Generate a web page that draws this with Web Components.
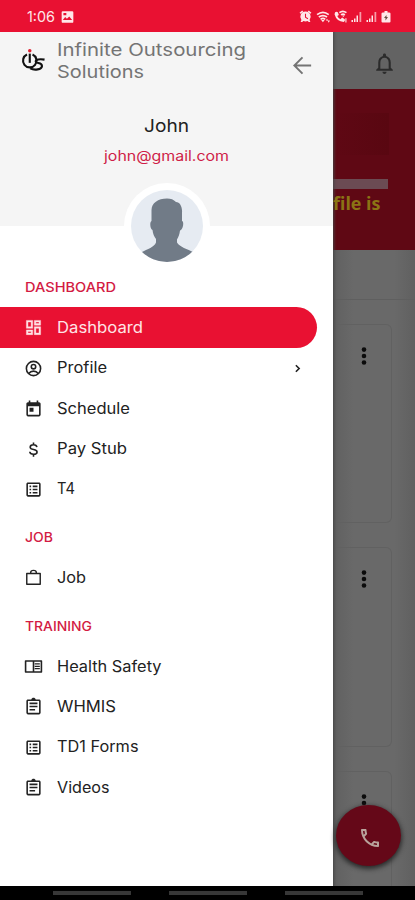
<!DOCTYPE html>
<html lang="en"><head><meta charset="utf-8"><title>Infinite Outsourcing Solutions</title>
<style>html,body{margin:0;padding:0;background:#000}</style></head>
<body><app-screen></app-screen>
<script>
const define = (name, html, setup) => {
  const t = document.createElement('template');
  t.innerHTML = html;
  customElements.define(name, class extends HTMLElement {
    connectedCallback() {
      if (this.shadowRoot) return;
      this.attachShadow({mode: 'open'}).append(t.content.cloneNode(true));
      if (setup) setup(this, this.shadowRoot);
    }
  });
};

const ICONS = {
  dashboard: '<path d="M19 5v2h-4V5h4M9 5v6H5V5h4m10 8v6h-4v-6h4M9 17v2H5v-2h4M21 3h-8v6h8V3zM11 3H3v10h8V3zm10 8h-8v10h8V11zm-10 4H3v6h8v-6z" stroke="currentColor" stroke-width=".5"/>',
  profile: '<g fill="none" stroke="currentColor" stroke-width="2"><circle cx="12" cy="12" r="9"/><circle cx="12" cy="9.7" r="2.8"/><path d="M6 18.3c1.5-2 3.600-3 6-3s4.500 1 6 3"/></g>',
  calendar: '<path d="M19 4h-1V2h-2v2H8V2H6v2H5c-1.100 0-2 .9-2 2v14c0 1.100.9 2 2 2h14c1.100 0 2-.9 2-2V6c0-1.100-.9-2-2-2zm0 16H5V9h14v11zM7 11h5v5H7z"/>',
  dollar: '<path d="M12 3v3m0 12v3M16.300 9c-.3-2-2-3-4.300-3-2.500 0-4.200 1.100-4.200 3 0 4 8.700 2 8.700 6 0 2-1.900 3-4.500 3s-4.500-1.100-4.700-3.200" fill="none" stroke="currentColor" stroke-width="2"/>',
  list: '<path d="M19 5v14H5V5h14m0-2H5c-1.100 0-2 .9-2 2v14c0 1.100.9 2 2 2h14c1.100 0 2-.9 2-2V5c0-1.100-.9-2-2-2zM11 7h6v2h-6zm0 4h6v2h-6zm0 4h6v2h-6zM7 7h2v2H7zm0 4h2v2H7zm0 4h2v2H7z"/>',
  bag: '<path d="M8.500 7V5.500C8.500 4 9.500 3 12 3s3.500 1 3.500 2.500V7M3.500 7h17v13.500h-17z" fill="none" stroke="currentColor" stroke-width="1.800" stroke-linejoin="round"/>',
  reader: '<path d="M2 5h20v14H2zM12 5v14" fill="none" stroke="currentColor" stroke-width="2" stroke-linejoin="round"/><path d="M13.500 8H20v1.500h-6.500zm0 3H20v1.500h-6.500zm0 3H20v1.500h-6.500z"/>',
  clipboard: '<path d="M7 15h7v2H7zm0-4h10v2H7zm0-4h10v2H7zM19 3h-4.180C14.400 1.840 13.300 1 12 1s-2.400.84-2.820 2H5c-1.100 0-2 .9-2 2v15c0 1.100.9 2 2 2h14c1.100 0 2-.9 2-2V5c0-1.100-.9-2-2-2zm0 17H5V5h14v15z"/>',
  chevron: '<path d="M9 6l6 6-6 6" fill="none" stroke="currentColor" stroke-width="3"/>',
  back: '<path d="M21 12H4M12 3.500L3.500 12l8.500 8.500" fill="none" stroke="currentColor" stroke-width="2"/>',
  bell: '<path d="M12 22c1.100 0 2-.9 2-2h-4c0 1.100.9 2 2 2zm6-6v-5c0-3.070-1.630-5.640-4.500-6.320V4c0-.83-.67-1.500-1.500-1.500s-1.500.67-1.500 1.500v.68C7.640 5.360 6 7.920 6 11v5l-2 2v1h16v-1l-2-2zm-2 1H8v-6c0-2.480 1.510-4.500 4-4.500s4 2.020 4 4.500v6z"/>',
  phone: '<path d="M6.540 5c.06.89.21 1.760.45 2.590l-1.200 1.200c-.41-1.200-.67-2.470-.76-3.790h1.510m9.860 12.020c.85.24 1.720.39 2.600.45v1.490c-1.320-.09-2.590-.35-3.800-.75l1.200-1.190M7.500 3H4c-.55 0-1 .45-1 1 0 9.390 7.610 17 17 17 .55 0 1-.45 1-1v-3.490c0-.55-.45-1-1-1-1.240 0-2.450-.2-3.570-.57-.1-.04-.21-.05-.31-.05-.26 0-.51.1-.71.290l-2.200 2.200c-2.830-1.450-5.150-3.760-6.590-6.590l2.200-2.200c.28-.28.36-.67.25-1.020C8.700 6.450 8.500 5.250 8.500 4c0-.55-.45-1-1-1z"/>',
  dots: '<circle cx="12" cy="5" r="2.500"/><circle cx="12" cy="12" r="2.500"/><circle cx="12" cy="19" r="2.500"/>',
  photo: '<path fill-rule="evenodd" d="M4 2h16q2 0 2 2v16q0 2-2 2H4q-2 0-2-2V4q0-2 2-2zm0 15h16l-5-6-4 4-3-3zM5 5v4h5V5z"/>',
  alarm: '<path d="M6 1 1 5l2 2 5-4zm12 0 5 4-2 2-5-4z"/><path fill-rule="evenodd" d="M12 3a9.500 9.500 0 0 1 7.500 15.500L21 22h-3l-2-1.500a10 10 0 0 1-8 0L6 22H3l1.500-3.500A9.500 9.500 0 0 1 12 3zm-1 4v7l5 3 1-2-4-2V7z"/>',
  wifi: '<g fill="none" stroke="currentColor" stroke-width="3"><path d="M1 8q10-8 20 0M4 12q7-5 14 0M7 16q4-3 8 0"/></g><path d="m8 17 3 4 3-4zM16 18l2-3 2 3zM19 18l2 4 2-4z"/>',
  call: '<path d="M2 4q3-2 5 0l2 5-3 2q2 4 6 6l3-3 5 3q1 3-2 5Q5 22 1 8z"/><path d="M10 5q6-5 13 0M13 9q4-3 7 0" fill="none" stroke="currentColor" stroke-width="3"/><path d="m15 10 2 3 3-3zm6 5h2v8h-2z"/>',
  signal: '<path d="M2 18h3v4H2zm5-3h3v7H7zM12 9h3v13h-3z"/><path d="M18 2h3.500v20H18z" opacity=".65"/>',
  battery: '<path d="M9 0h6v3h3q3 0 3 2v16q0 2-2 2H5q-2 0-2-2V5q0-2 3-2h3z"/><path d="M13 8l-5 6h3v5l5-7h-3z" fill="#684c42"/>',
  logo: '<g fill="none" stroke="#111" stroke-width="2.300"><path d="M7.500 6A7.300 7.300 0 1 0 13.500 6"/><path d="M10.500 5v10"/><path d="M26.500 11.500c-5-.8-10-.3-9.500 2.300.5 2.200 7 .6 6.700 4.700-.3 3.800-8 5-12.700 2.500"/></g><circle cx="10.500" cy="2" r="1.900" fill="#df2030"/>'
};

define('ui-icon', '<style>:host{display:block;flex:none;line-height:0}svg{width:100%;height:100%;display:block;overflow:visible}</style>', (el, root) => {
  const box = el.getAttribute('name') === 'logo' ? '0 0 28 26' : '0 0 24 24';
  root.innerHTML += `<svg viewBox="${box}" fill="currentColor">${ICONS[el.getAttribute('name')]}</svg>`;
});

/* A line of text whose glyphs are widened so that it fills its "w" width. */
define('fit-text', '<style>:host{display:block;white-space:nowrap}span{display:inline-block;transform-origin:0 50%}</style><span></span>', (el, root) => {
  const s = root.querySelector('span');
  s.textContent = el.getAttribute('text');
  const w = +el.getAttribute('w');
  const natural = s.getBoundingClientRect().width;
  el.style.width = w + 'px';
  s.style.transform = `scaleX(${w / natural})`;
});

define('status-bar', `<style>
:host{display:flex;align-items:center;height:32px;box-sizing:border-box;padding:1px 23px 0 27px;background:#e91132;color:#ffe6e8;font-size:14.500px}
.r{display:flex;align-items:center;gap:2px;margin-left:auto}
fit-text{margin-right:5px}</style>
<fit-text text="1:06" w="28"></fit-text><ui-icon name="photo" style="width:15px;height:14px"></ui-icon>
<div class="r"><ui-icon name="alarm" style="width:13px;height:13px;margin-right:2px"></ui-icon><ui-icon name="wifi" style="width:15px;height:14px"></ui-icon><ui-icon name="call" style="width:15px;height:13px"></ui-icon><ui-icon name="signal" style="width:13px;height:12px"></ui-icon><ui-icon name="signal" style="width:13px;height:12px"></ui-icon><ui-icon name="battery" style="width:12px;height:12px"></ui-icon></div>`);

define('nav-label', `<style>:host{display:flex;align-items:center;height:48.300px;box-sizing:border-box;padding:8px 0 0 25px;color:#d31b43;font-size:13px;font-weight:500}</style><slot></slot>`);

define('nav-item', `<style>
:host{display:flex;align-items:center;height:40.350px;box-sizing:border-box;padding:0 13px 0 24px;margin-right:16px;color:#222;font-size:15.200px}
:host([active]){background:#e91132;color:#ffe3e6;border-radius:0 21px 21px 0}
.i{width:19px;height:19px;margin:1px 14px 0 0}
.c{width:13px;height:13px;margin:2px 0 0 auto}
</style>`, (el, root) => {
  const a = n => el.getAttribute(n);
  root.innerHTML += `<ui-icon class="i" name="${a('icon')}"></ui-icon><fit-text text="${a('text')}" w="${a('w')}"></fit-text>` + (el.hasAttribute('more') ? '<ui-icon class="c" name="chevron"></ui-icon>' : '');
});

define('user-avatar', `<style>:host{display:block;box-sizing:border-box;width:86px;height:86px;padding:7px;border-radius:50%;background:#fff}svg{display:block;border-radius:50%;background:#e6ebf2}</style>
<svg width="72" height="72" viewBox="0 0 72 72"><path fill="#717b87" d="M36 8.500c4 0 6.500 1 9 3.500 4 0 6.500 5 6 11v8c2 0 1.500 7-1 9l-1 .5c-.5 4-1.500 6.500-3 9v3c3 5 10 6 17 10L56 74H16l-6-11.500c7-4 13-5 15-10v-3.500c-2-2.500-3-5-3.500-9-2.500-1-3-8-1-9v-11C20.500 13 27 8.500 36 8.500z"/></svg>`);

define('drawer-header', `<style>
:host{display:flex;flex-direction:column;align-items:center;height:194px;background:#f5f5f5;color:#222}
.top{display:flex;flex:none;width:333px;height:82px;box-sizing:border-box;padding:7px 19px 0 20px;color:#747474;font-size:17.500px;line-height:22px}
.n{flex:1;margin-left:11px}
.back{width:23px;height:23px;margin-top:15px}
.logo{width:26px;height:24px;margin-top:10px}
.name,.mail{flex:none}
.name{font-size:17.500px;line-height:24px}.mail{color:#cf1d48;font-size:13.800px;line-height:20px;margin-top:8px}
user-avatar{margin-top:17px;flex:none}</style>
<div class="top"><ui-icon class="logo" name="logo"></ui-icon><div class="n"><fit-text text="Infinite Outsourcing" w="189"></fit-text><fit-text text="Solutions" w="87"></fit-text></div><ui-icon class="back" name="back"></ui-icon></div>
<fit-text class="name" text="John" w="45"></fit-text><fit-text class="mail" text="john@gmail.com" w="125"></fit-text><user-avatar></user-avatar>`);

define('side-drawer', `<style>
:host{display:block;width:333px;background:#fff;box-shadow:0 0 3px 1px #444}
nav{display:block;padding-top:33px}</style>
<drawer-header></drawer-header><nav>
<nav-label><fit-text text="DASHBOARD" w="91"></fit-text></nav-label>
<nav-item active icon="dashboard" text="Dashboard" w="86"></nav-item>
<nav-item icon="profile" text="Profile" w="50" more></nav-item>
<nav-item icon="calendar" text="Schedule" w="73"></nav-item>
<nav-item icon="dollar" text="Pay Stub" w="70"></nav-item>
<nav-item icon="list" text="T4" w="18"></nav-item>
<nav-label><fit-text text="JOB" w="28"></fit-text></nav-label>
<nav-item icon="bag" text="Job" w="29"></nav-item>
<nav-label><fit-text text="TRAINING" w="67"></fit-text></nav-label>
<nav-item icon="reader" text="Health Safety" w="104.500"></nav-item>
<nav-item icon="clipboard" text="WHMIS" w="59"></nav-item>
<nav-item icon="list" text="TD1 Forms" w="81.500"></nav-item>
<nav-item icon="clipboard" text="Videos" w="52.500"></nav-item></nav>`);

define('dim-card', `<style>:host{display:block;box-sizing:border-box;margin-right:23px;border:1px solid #616161;border-left:0;border-radius:0 6px 6px 0;padding:20px 0 0 20px}ui-icon{width:22px;height:22px;color:#0b0b0b}</style><ui-icon name="dots"></ui-icon>`);

define('page-behind', `<style>
:host{display:flex;flex-direction:column;flex:1;min-width:0;overflow:hidden;background:linear-gradient(90deg,#606060,#696969 25%,#696969 75%,#606060)}
.bar{height:57px;flex:none;display:flex;justify-content:center;align-items:center;padding:5px 0 0 21px;box-sizing:border-box;background:#636363;color:#2b2b2b}
.bar ui-icon{width:25px;height:25px}
.banner{height:161px;flex:none;background:#5f0814;box-sizing:border-box;padding-top:24px;color:#8b7414;font:700 17px/22px "Open Sans",sans-serif}
.ghost{height:42px;width:56px;background:linear-gradient(90deg,#5f0814,#590711)}.track{height:10px;width:55px;margin:24px 0 4px;background:#6b4b53}
.tab{height:50px;flex:none;box-sizing:border-box;border-bottom:1px solid #5f5f5f;margin-bottom:24px}
dim-card{flex:none}</style>
<div class="bar"><ui-icon name="bell"></ui-icon></div>
<div class="banner"><div class="ghost"></div><div class="track"></div><fit-text text="file is" w="47.500"></fit-text></div>
<div class="tab"></div>
<dim-card style="height:199px;margin-bottom:24px"></dim-card><dim-card style="height:200px;margin-bottom:24px"></dim-card><dim-card style="height:130px"></dim-card>`);

define('call-button', `<style>:host{display:flex;align-items:center;justify-content:center;width:65px;height:61px;border-radius:50%;background:#650818;color:#b9a39c;box-shadow:0 2px 5px 1px #292929}ui-icon{width:24px;height:24px;margin:5px 0 0 3px}</style><ui-icon name="phone"></ui-icon>`);

define('system-nav', `<style>:host{display:flex;gap:38px;height:14px;box-sizing:border-box;padding:5px 0 0 53px;background:#000;position:relative}i{width:78px;height:4px;background:#373737}</style><i></i><i></i><i></i>`);

define('app-screen', `<style>
:host{display:flex;flex-direction:column;width:415px;height:900px;overflow:hidden;position:relative;font-family:Inter,"Liberation Sans",sans-serif}
main{display:flex;height:854px;overflow:hidden}side-drawer{flex:none;position:relative}
call-button{position:absolute;right:14px;bottom:34px}</style>
<status-bar></status-bar><main><side-drawer></side-drawer><page-behind></page-behind></main><system-nav></system-nav><call-button></call-button>`);
</script></body></html>
